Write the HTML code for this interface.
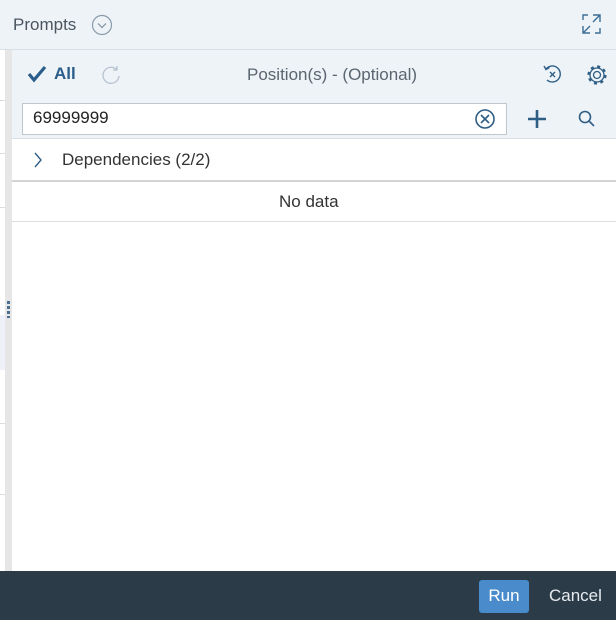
<!DOCTYPE html><html><head><style>
body{margin:0;width:616px;height:620px;position:relative;overflow:hidden;font-family:"Liberation Sans",sans-serif;background:#fff}
.a{position:absolute}
</style></head><body>
<div class="a" style="left:0;top:0;width:616px;height:49px;background:#eef3f8;border-bottom:1px solid #d9dfe5"></div>
<div class="a" style="left:13px;top:15px;font-size:17px;color:#4a5560">Prompts</div>
<svg class="a" style="left:91px;top:14px" width="22" height="22"><circle cx="11" cy="11" r="9.5" fill="none" stroke="#8a9aaa" stroke-width="1.2"/><path d="M7 9.5l4 4 4-4" fill="none" stroke="#8a9aaa" stroke-width="1.3"/></svg>
<svg class="a" style="left:581px;top:13px" width="22" height="22" fill="none" stroke="#3b6e96" stroke-width="1.4"><path d="M2 7V2h5M12 2h7v7M19 2l-7 7M2 13v7h7M2 20l7-7M14 20h5v-5"/></svg>
<div class="a" style="left:0;top:50px;width:5px;height:521px;background:#fff"></div>
<div class="a" style="left:0;top:100px;width:5px;height:1px;background:#ddd"></div>
<div class="a" style="left:0;top:153px;width:5px;height:1px;background:#ddd"></div>
<div class="a" style="left:0;top:207px;width:5px;height:1px;background:#ddd"></div>
<div class="a" style="left:0;top:315px;width:5px;height:55px;background:#eef1f8"></div>
<div class="a" style="left:0;top:423px;width:5px;height:1px;background:#ddd"></div>
<div class="a" style="left:0;top:494px;width:5px;height:1px;background:#ddd"></div>
<div class="a" style="left:5px;top:50px;width:7px;height:521px;background:#e6e6e6"></div>
<div class="a" style="left:7px;top:301px;width:3px;height:17px;background:repeating-linear-gradient(#4a6f92 0 3px,transparent 3px 5px)"></div>
<div class="a" style="left:12px;top:50px;width:604px;height:88px;background:#eef3f8;border-bottom:1px solid #d9dfe5"></div>
<svg class="a" style="left:27px;top:65px" width="20" height="18"><path d="M2 9l5 6L18 2" fill="none" stroke="#2a5d8a" stroke-width="3.2"/></svg>
<div class="a" style="left:54px;top:64px;font-size:17px;font-weight:bold;color:#2a5d8a">All</div>
<svg class="a" style="left:100px;top:64px" width="22" height="22" fill="none" stroke="#b7c3cf" stroke-width="1.3"><path d="M16.5 5.5A8 8 0 1 0 19 12"/><path d="M17 2v4h-4"/></svg>
<div class="a" style="left:247px;top:65px;font-size:17px;color:#5a6570">Position(s) - (Optional)</div>
<svg class="a" style="left:541px;top:63px" width="22" height="22" fill="none" stroke="#2f5e85" stroke-width="1.4"><path d="M5 6A8 8 0 1 1 6 17"/><path d="M3 3l2 3.5 3.5-2"/><path d="M9 9l5 5M14 9l-5 5"/></svg>
<svg class="a" style="left:586px;top:64px" width="22" height="22" fill="none" stroke="#2f5e85"><circle cx="11" cy="11" r="3.5" stroke-width="1.3"/><circle cx="11" cy="11" r="7" stroke-width="1.3"/><circle cx="11" cy="11" r="8.3" stroke-width="2.6" stroke-dasharray="3 3.5"/></svg>
<div class="a" style="left:22px;top:103px;width:483px;height:30px;background:#fff;border:1px solid #bfc6cc"></div>
<div class="a" style="left:33px;top:108px;font-size:17px;color:#222">69999999</div>
<svg class="a" style="left:474px;top:108px" width="22" height="22" fill="none" stroke="#2f5e85" stroke-width="1.6"><circle cx="11" cy="11" r="9"/><path d="M7 7l8 8M15 7l-8 8"/></svg>
<svg class="a" style="left:526px;top:108px" width="22" height="22" stroke="#2f5e85" stroke-width="2.6"><path d="M11 2v18M2 11h18"/></svg>
<svg class="a" style="left:577px;top:109px" width="20" height="20" fill="none" stroke="#2f5e85" stroke-width="1.6"><circle cx="8" cy="8" r="5.5"/><path d="M12 12l5 5"/></svg>
<svg class="a" style="left:32px;top:151px" width="12" height="18" fill="none" stroke="#2f5e85" stroke-width="1.4"><path d="M3 2l6 7-6 7"/></svg>
<div class="a" style="left:62px;top:150px;font-size:17px;color:#333">Dependencies (2/2)</div>
<div class="a" style="left:12px;top:180px;width:604px;height:2px;background:#d4d4d4"></div>
<div class="a" style="left:279px;top:192px;font-size:17px;color:#333">No data</div>
<div class="a" style="left:12px;top:221px;width:604px;height:1px;background:#ddd"></div>
<div class="a" style="left:0;top:571px;width:616px;height:49px;background:#2c3b48"></div>
<div class="a" style="left:479px;top:580px;width:50px;height:33px;background:#4a8ccb;border-radius:3px;color:#fff;font-size:17px;text-align:center;line-height:32px">Run</div>
<div class="a" style="left:549px;top:586px;font-size:17px;color:#e6ebf0">Cancel</div>
</body></html>
